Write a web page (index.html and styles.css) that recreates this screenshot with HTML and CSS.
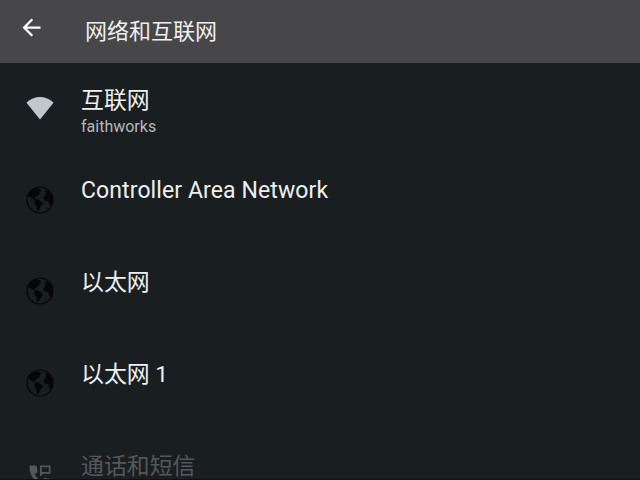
FILE: index.html
```html
<!DOCTYPE html>
<html lang="zh-CN">
<head>
  <meta charset="UTF-8">
  <meta name="viewport" content="width=device-width, initial-scale=1.0">
  <title>网络和互联网</title>
  <link rel="stylesheet" href="styles.css">
</head>
<body>
  <svg class="sprite" aria-hidden="true">
    <symbol id="globe" viewBox="0 0 28 28">
      <circle cx="14" cy="14" r="13" fill="none" stroke="currentColor" stroke-width="1.2"/>
      <path d="M2 10 4 5.500 8 2.800 11 2.200 14.200 3.200 15 5 13.200 6.600 13.600 8.200 11.400 9.600 9.800 11.200 8.600 11 8.400 12.200 10.200 13.400 9.400 14 6.400 12.600 4.400 11Z"/>
      <path d="M8.800 13.800 12.400 13.600 14.400 15.200 17 16.400 16.400 18.800 14.800 20.200 13.800 22.400 12.200 25 10.600 24.400 10.800 20.600 8.800 18 8.200 15.800Z"/>
      <path d="M18.600 4.600 21.800 4.400 24.600 7.200 26.800 11.400 27 15.400 25.600 19.400 24 20 22.800 17.600 22.800 15.600 21 15 18.600 14.600 17.400 12.400 18.400 10 20.400 9 18.600 8.400 20.400 6.600Z"/>
    </symbol>
  </svg>

  <header class="toolbar">
    <button class="back" aria-label="返回">
      <svg viewBox="0 0 24 24"><path d="M20 11H7.830l5.590-5.590L12 4l-8 8 8 8 1.410-1.410L7.830 13H20v-2z"/></svg>
    </button>
    <h1>网络和互联网</h1>
  </header>

  <main class="list">
    <div class="item">
      <svg class="icon wifi" viewBox="0 0 28 28"><path d="M14 25.600.5 8.800C4.200 5 9 3 14 3s9.800 2 13.500 5.800Z"/></svg>
      <div class="text">
        <div class="title">互联网</div>
        <div class="summary">faithworks</div>
      </div>
    </div>
    <div class="item">
      <svg class="icon globe"><use href="#globe"/></svg>
      <div class="text"><div class="title latin">Controller Area Network</div></div>
    </div>
    <div class="item">
      <svg class="icon globe"><use href="#globe"/></svg>
      <div class="text"><div class="title">以太网</div></div>
    </div>
    <div class="item">
      <svg class="icon globe"><use href="#globe"/></svg>
      <div class="text"><div class="title">以太网 1</div></div>
    </div>
    <div class="item disabled">
      <svg class="icon phone" viewBox="0 0 24 24">
        <path d="M20 14.200c-1.250 0-2.450-.2-3.570-.5-.35-.1-.74 0-1.020.24l-2.200 2.200c-2.830-1.440-4.650-3.250-5.800-5.600L9.500 9c.28-.27.36-.66.3-1.010L9.300 4c-.05-.55-.45-1-1-1H4c-.55 0-1 .45-1 1 0 9.390 7.610 17 17 17 .55 0 1-.45 1-1v-4.800c0-.55-.45-1-1-1z"/>
        <path fill-rule="evenodd" d="M12 3v9.500l2.800-2.500H21V3h-9zm7.500 5.500h-6v-4h6v4z"/>
      </svg>
      <div class="text"><div class="title">通话和短信</div></div>
    </div>
  </main>
  <div class="navbar"></div>
</body>
</html>
```

FILE: styles.css
```css
:root {
  --bg: #191e20;
  --toolbar: #474749;
  --text: #efefef;
  --text-dim: #b5b8ba;
}
* { box-sizing: border-box; margin: 0; padding: 0; }
body {
  height: 100vh;
  display: flex;
  flex-direction: column;
  overflow: hidden;
  background: var(--bg);
  color: var(--text);
  font-family: Roboto, "Noto Sans CJK SC", sans-serif;
}
.sprite {
  display: none;
}
.toolbar {
  flex: none;
  height: 63px;
  display: flex;
  align-items: center;
  padding-left: 18px;
  background: var(--toolbar);
}
.back {
  width: 27px;
  height: 27px;
  margin-bottom: 9px;
  border: none;
  background: none;
  color: #fff;
}
.back svg {
  display: block;
  width: 27px;
  height: 27px;
  fill: currentColor;
}
.toolbar h1 {
  margin-left: 40px;
  font-size: 22px;
  font-weight: 400;
  line-height: 32px;
}
.list {
  flex: 1;
  min-height: 0;
  overflow: hidden;
}
.item {
  height: 91.5px;
  display: flex;
  padding-left: 26px;
}
.icon {
  flex: none;
  width: 28px;
  height: 28px;
  margin-top: 31px;
  fill: currentColor;
}
.wifi {
  margin-left: 0.4px;
  margin-right: -0.4px;
}
.wifi {
  color: #c0c6cc;
}
.globe {
  margin-top: 31px;
  margin-left: 0.4px;
  margin-right: -0.4px;
  color: #050607;
}
.phone {
  margin-top: 32.5px;
}
.text {
  margin-left: 27px;
  padding-top: 20.4px;
}
.title {
  font-size: 22.9px;
  line-height: 34px;
  white-space: nowrap;
}
.item:first-child .text,
.item.disabled .text {
  padding-top: 21px;
}
.latin {
  font-size: 23px;
  line-height: 31px;
  letter-spacing: 0.1px;
}
.summary {
  margin-top: -1px;
  font-size: 16px;
  line-height: 19px;
  color: var(--text-dim);
}
.disabled {
  color: #55585a;
}
.navbar {
  flex: none;
  height: 1px;
  background: #150f17;
}
```
